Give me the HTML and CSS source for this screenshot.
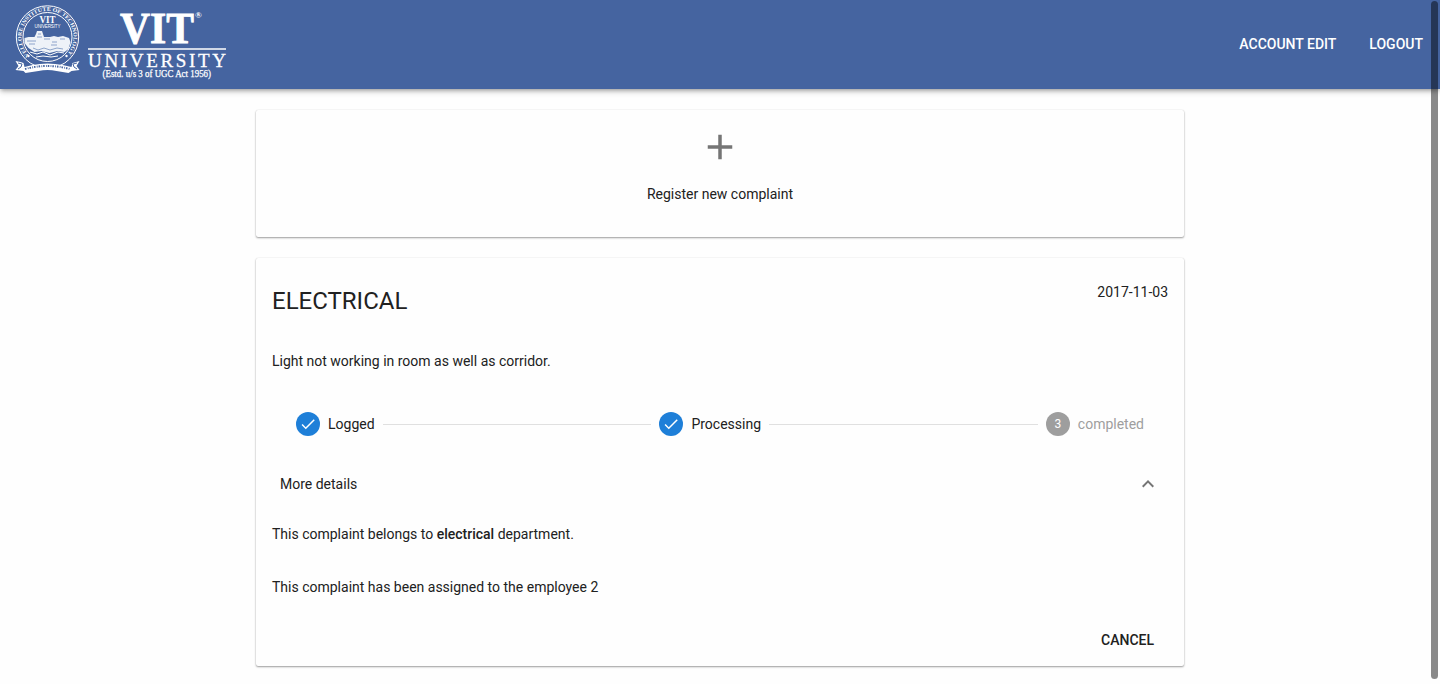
FILE: index.html
```html
<!DOCTYPE html>
<html lang="en">
<head>
<meta charset="utf-8">
<title>VIT Complaints</title>
<link rel="stylesheet" href="styles.css">
</head>
<body>
<header class="toolbar">
  <svg class="logo" width="230" height="89" viewBox="0 0 230 89" role="img" aria-label="VIT University">
    <defs><path id="ring" d="M29.300 55.500A26 26 0 1 1 65.700 55.500"/></defs>
    <g fill="none" stroke="#fff">
      <circle cx="47.500" cy="37" r="31.200" stroke-width="1"/>
      <circle cx="47.500" cy="37" r="24.500" stroke-width="1"/>
    </g>
    <text class="seal-text" font-size="5.600"><textPath href="#ring" textLength="120" lengthAdjust="spacingAndGlyphs">VELLORE INSTITUTE OF TECHNOLOGY</textPath></text>
    <text class="seal-text" x="47.500" y="23.300" font-size="9.500" text-anchor="middle" textLength="16" lengthAdjust="spacingAndGlyphs">VIT</text>
    <text class="seal-sub" x="47.500" y="28" font-size="4.500" text-anchor="middle" textLength="26">UNIVERSITY</text>
    <path fill="#eef2f8" d="M24.500 38l4-1h6l1.500-3 1-3h5l1 3 1 3h6l4-1 4 1 5-1 6 2 1.500 4-2 7-4 3-7-1-8 2-8-2-7 1-6-4-4-5z"/>
    <path fill="none" stroke="#7590bf" stroke-width=".8" d="M27 41h9m-7 3h6m9-5h6m2 3h5m3-3h5m-14 6h6m-24 3l5 2 6-2 6 2 7-2 6 1M38 34h3m-4 3h5"/>
    <path fill="none" stroke="#fff" d="M30 52l7 2 6-2 7 3 8-3 6 1M36 57l7-1 8 1 7-1"/>
    <path fill="#fff" d="M15.500 61l5 1 3 1 1 4 8-2c10-2 20-2 30 0l9 2 1-4 7-2-3 5 3 4-8 1-3 2-12-2c-6-1.500-12-1.500-18 0l-13 2-2-2-8-1 3-4z"/>
    <path fill="none" stroke="#4564a0" d="M18 63l4 1-1 3-3 2M77 63l-4 1 1 3 3 2"/>
    <path fill="none" stroke="#4564a0" stroke-width="2" stroke-dasharray="1.500 1.300 .8 1" d="M25 69q23-6 45 0"/>
    <g fill="#fff"><circle cx="28.500" cy="56" r="1.200"/><circle cx="66.500" cy="56" r="1.200"/></g>
    <text class="word-vit" x="120" y="43" textLength="74" lengthAdjust="spacingAndGlyphs">VIT</text>
    <text class="mark" x="195" y="17.500">®</text>
    <path stroke="#fff" stroke-width="1.300" d="M88 49h138"/>
    <text class="word-uni" x="88" y="66.500" textLength="138">UNIVERSITY</text>
    <text class="word-est" x="102.500" y="77" textLength="108.500" lengthAdjust="spacingAndGlyphs">(Estd. u/s 3 of UGC Act 1956)</text>
  </svg>
  <nav class="nav">
    <a class="nav-link">Account edit</a>
    <a class="nav-link">Logout</a>
  </nav>
</header>
<main class="content">
  <section class="card register">
    <svg class="plus" width="42" height="42" viewBox="0 0 24 24"><path d="M19 13h-6v6h-2v-6H5v-2h6V5h2v6h6z"/></svg>
    <p class="register-label">Register new complaint</p>
  </section>
  <section class="card complaint">
    <div class="complaint-head">
      <h1 class="title">ELECTRICAL</h1>
      <time class="date">2017-11-03</time>
    </div>
    <p class="description">Light not working in room as well as corridor.</p>
    <div class="stepper">
      <div class="step">
        <span class="badge"><svg width="18" height="18" viewBox="0 0 24 24"><path d="M9 16.200L4.800 12l-1.400 1.400L9 19 21 7l-1.400-1.400z"/></svg></span>
        <span class="step-label">Logged</span>
      </div>
      <hr class="line">
      <div class="step">
        <span class="badge"><svg width="18" height="18" viewBox="0 0 24 24"><path d="M9 16.200L4.800 12l-1.400 1.400L9 19 21 7l-1.400-1.400z"/></svg></span>
        <span class="step-label">Processing</span>
      </div>
      <hr class="line">
      <div class="step pending">
        <span class="badge">3</span>
        <span class="step-label">completed</span>
      </div>
    </div>
    <div class="details-head">
      <span>More details</span>
      <svg class="chevron" width="24" height="24" viewBox="0 0 24 24"><path d="M12 8l-6 6 1.410 1.410L12 10.830l4.590 4.580L18 14z"/></svg>
    </div>
    <p class="detail">This complaint belongs to <b>electrical</b> department.</p>
    <p class="detail">This complaint has been assigned to the employee <span>2</span></p>
    <div class="actions"><button class="cancel">Cancel</button></div>
  </section>
</main>
<div class="scrollbar"></div>
</body>
</html>
```
FILE: styles.css
```css
* { box-sizing: border-box; }
body {
  margin: 0;
  height: 684px;
  overflow: hidden;
  background: #fefefe;
  color: #212121;
  font: 400 14px/20px Roboto, sans-serif;
}
p, h1 { margin: 0; }
.toolbar {
  display: flex;
  justify-content: space-between;
  height: 89px;
  background: #4564a0;
  box-shadow: 0 2px 4px -1px rgba(0,0,0,.3), 0 3px 6px rgba(0,0,0,.16);
}
.logo { display: block; font-family: "Liberation Serif", serif; fill: #fff; }
.seal-text { font-weight: 700; }
.seal-sub { font-family: "Liberation Sans", sans-serif; }
.word-vit { font-size: 45px; font-weight: 700; stroke: #fff; stroke-width: .8px; }
.mark { font-size: 9px; font-weight: 700; }
.word-uni { font-size: 19px; stroke: #fff; stroke-width: .3px; }
.word-est { font-size: 9.500px; stroke: #fff; stroke-width: .25px; }
.nav { display: flex; align-items: center; gap: 33px; padding: 0 17px 1px 0; }
.nav-link { color: #fff; font-weight: 500; text-transform: uppercase; }
.content { width: 928px; margin: 21px auto 0; }
.card {
  background: #fefefe;
  border-radius: 2px;
  box-shadow: 0 1px 2px rgba(0,0,0,.38), 0 0 1px rgba(0,0,0,.16);
}
.register {
  display: flex;
  flex-direction: column;
  align-items: center;
  height: 127px;
  padding-top: 16px;
  margin-bottom: 21px;
}
.plus { fill: #757575; }
.register-label { margin-top: 16px; }
.complaint { height: 408px; padding: 24px 16px 0; }
.complaint-head { display: flex; justify-content: space-between; height: 69px; }
.title { font-size: 24px; font-weight: 400; line-height: 38px; }
.description { height: 20px; }
.stepper { display: flex; align-items: center; gap: 8px; height: 24px; margin: 41px 24px 0; }
.step { display: flex; align-items: center; gap: 8px; }
.badge {
  display: flex;
  align-items: center;
  justify-content: center;
  width: 24px;
  height: 24px;
  border-radius: 50%;
  background: #1e7fd8;
  color: #fff;
  font-size: 12px;
}
.badge svg { fill: #fff; }
.line { flex: 1; height: 1px; margin: 0; border: 0; background: #e0e0e0; }
.pending { color: #9e9e9e; }
.pending .badge { background: #9e9e9e; }
.details-head {
  display: flex;
  align-items: center;
  justify-content: space-between;
  height: 24px;
  margin: 36px 8px 28px;
}
.chevron { fill: #757575; }
.detail { height: 20px; margin-bottom: 33px; }
.detail b { font-weight: 500; }
.actions { display: flex; justify-content: flex-end; padding-right: 14px; }
.cancel {
  padding: 0;
  border: 0;
  background: none;
  color: #212121;
  font: 500 14px/20px Roboto, sans-serif;
  text-transform: uppercase;
}
.scrollbar {
  position: absolute;
  top: 1px;
  right: 2px;
  width: 7px;
  height: 678px;
  border-radius: 4px;
  background: rgba(0,0,0,.46);
}
```
